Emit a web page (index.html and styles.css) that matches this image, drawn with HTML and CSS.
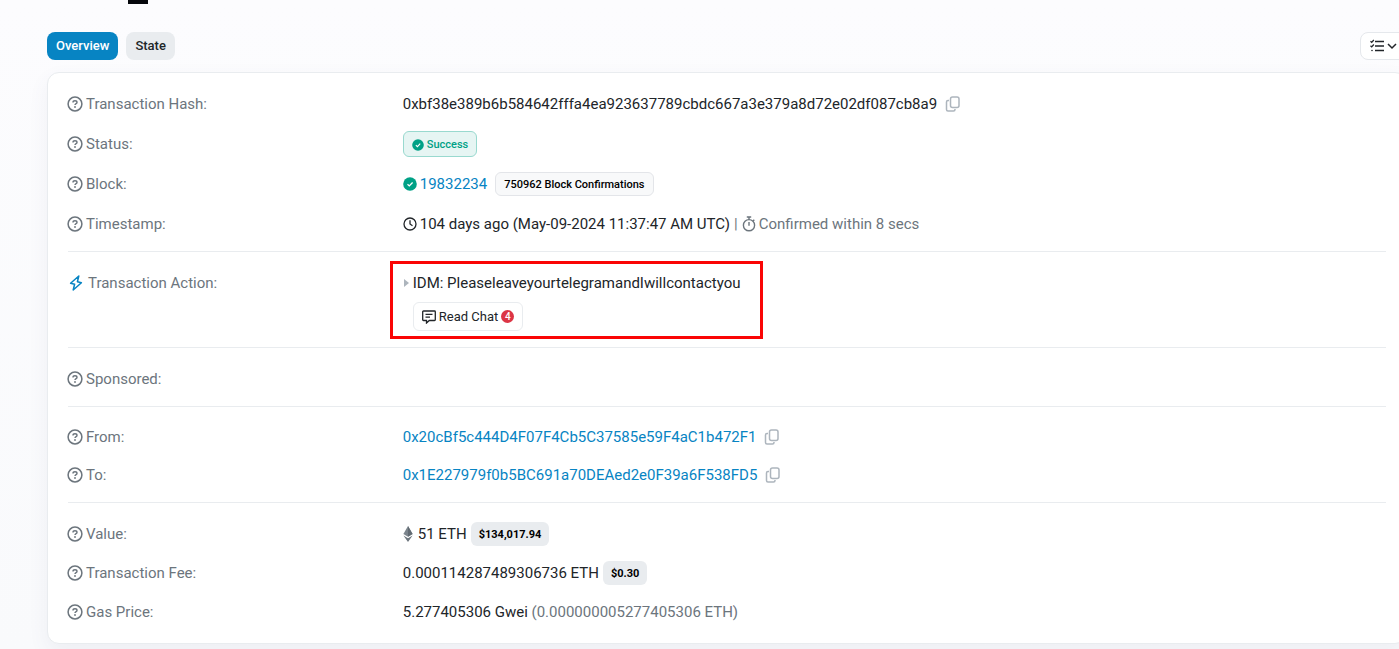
FILE: index.html
```
<!DOCTYPE html>
<html lang="en">

<head>
    <meta charset="UTF-8">
    <meta name="viewport" content="width=device-width, initial-scale=1.0">
    <title>Transaction Details</title>
    <link rel="stylesheet" href="styles.css">
</head>

<body>

    <!-- shared icons -->
    <svg class="sprite" aria-hidden="true">
        <symbol id="help" viewBox="0 0 16 16">
            <circle cx="8" cy="8" r="6.9" fill="none" stroke="currentColor" stroke-width="1.5" />
            <path d="M6 6.4C6 5.3 6.8 4.8 8 4.8S10 5.4 10 6.4C10 7.6 8 7.5 8 9" fill="none" stroke="currentColor" stroke-width="1.4" />
            <circle cx="8" cy="11" r=".9" fill="currentColor" />
        </symbol>
        <symbol id="copy" viewBox="0 0 16 16">
            <rect x="5.5" y="1" width="8.500" height="10.500" rx="2" fill="none" stroke="currentColor" stroke-width="1.5" />
            <path d="M4 4.500H3A1.500 1.500 0 0 0 1.500 6v7.500A1.500 1.500 0 0 0 3 15h5.500A1.500 1.500 0 0 0 10 13.500V13" fill="none" stroke="currentColor" stroke-width="1.5" />
        </symbol>
        <symbol id="check" viewBox="0 0 14 14">
            <circle cx="7" cy="7" r="6.8" fill="currentColor" />
            <path d="M4.500 7.200l1.800 1.700 3.300-3.400" fill="none" stroke="#fff" stroke-width="1.3" />
        </symbol>
    </svg>

    <div class="page">
        <div class="title-mark"></div>

        <nav>
            <button type="button" class="tab active">Overview</button>
            <button type="button" class="tab">State</button>
            <button type="button" class="options" aria-label="View options">
                <svg width="14" height="14" viewBox="0 0 14 14" fill="none" stroke="currentColor" stroke-width="1.3">
                    <path d="M5 2.500H14M5 7H14M5 11.500H14M.5 2.300l1.200 1.100L3.800 1M.5 6.800l1.200 1.100 2.100-2.400" />
                    <circle cx="2" cy="11.500" r=".8" fill="currentColor" stroke="none" />
                </svg>
                <svg width="10" height="8" viewBox="0 0 10 8" fill="none" stroke="currentColor" stroke-width="1.5">
                    <path d="M1 2l4 4 4-4" />
                </svg>
            </button>
        </nav>

        <main>
            <dl class="summary">
                <div class="row">
                    <dt><svg class="help"><use href="#help" /></svg>Transaction Hash:</dt>
                    <dd>0xbf38e389b6b584642fffa4ea923637789cbdc667a3e379a8d72e02df087cb8a9<button type="button" class="copy" aria-label="Copy hash"><svg><use href="#copy" /></svg></button></dd>
                </div>
                <div class="row">
                    <dt><svg class="help"><use href="#help" /></svg>Status:</dt>
                    <dd><span class="badge success"><svg><use href="#check" /></svg>Success</span></dd>
                </div>
                <div class="row">
                    <dt><svg class="help"><use href="#help" /></svg>Block:</dt>
                    <dd><svg class="icon green"><use href="#check" /></svg><a href="#">19832234</a><span class="badge confirmations">750962 Block Confirmations</span></dd>
                </div>
                <div class="row">
                    <dt><svg class="help"><use href="#help" /></svg>Timestamp:</dt>
                    <dd>
                        <svg class="icon" viewBox="0 0 14 14" fill="none" stroke="currentColor" stroke-width="1.3">
                            <circle cx="7" cy="7" r="6" />
                            <path d="M7 3.300V7l2.500 1.700" />
                        </svg>
                        <span>104 days ago (May-09-2024 11:37:47 AM UTC)</span>
                        <span class="muted bar">|</span>
                        <svg class="stopwatch muted" viewBox="0 0 14 16" fill="none" stroke="currentColor" stroke-width="1.4">
                            <circle cx="7" cy="9.200" r="5.600" />
                            <path d="M4.800 1h4.400M7 1v2.500M7 6v3.700M11 5l1.300-1.300" />
                        </svg>
                        <span class="muted">Confirmed within 8 secs</span>
                    </dd>
                </div>
            </dl>

            <dl class="action">
                <div class="row">
                    <dt>
                        <svg class="bolt" viewBox="0 0 16 16" fill="none" stroke="currentColor" stroke-width="1.500" stroke-linejoin="round">
                            <path d="M10.800 1L2.600 8.200l4 1.100L5.200 15l8.200-7.200-4-1.100z" />
                        </svg>Transaction Action:
                    </dt>
                    <dd>
                        <div class="message"><span class="arrow"></span>IDM: PleaseleaveyourtelegramandIwillcontactyou</div>
                        <button type="button" class="chat">
                            <svg width="14" height="14" viewBox="0 0 14 14" fill="none" stroke="currentColor" stroke-width="1.300">
                                <path d="M1.500 1h11a.8.8 0 0 1 .8.800v7.900a.8.800 0 0 1-.8.800H7.300L4.500 13v-2.500h-3a.8.800 0 0 1-.8-.8V1.800A.8.800 0 0 1 1.500 1zM3.500 4.400h7M3.500 7.200h4.500" />
                            </svg>
                            <span>Read Chat</span>
                            <span class="count">4</span>
                        </button>
                        <div class="highlight"></div>
                    </dd>
                </div>
            </dl>

            <dl>
                <div class="row">
                    <dt><svg class="help"><use href="#help" /></svg>Sponsored:</dt>
                    <dd></dd>
                </div>
            </dl>

            <dl class="addresses">
                <div class="row">
                    <dt><svg class="help"><use href="#help" /></svg>From:</dt>
                    <dd><a href="#">0x20cBf5c444D4F07F4Cb5C37585e59F4aC1b472F1</a><button type="button" class="copy" aria-label="Copy from address"><svg><use href="#copy" /></svg></button></dd>
                </div>
                <div class="row">
                    <dt><svg class="help"><use href="#help" /></svg>To:</dt>
                    <dd><a href="#">0x1E227979f0b5BC691a70DEAed2e0F39a6F538FD5</a><button type="button" class="copy" aria-label="Copy to address"><svg><use href="#copy" /></svg></button></dd>
                </div>
            </dl>

            <dl class="fees">
                <div class="row">
                    <dt><svg class="help"><use href="#help" /></svg>Value:</dt>
                    <dd>
                        <svg class="eth" viewBox="0 0 10 16">
                            <path d="M5 0L.4 8 5 10.800 9.600 8z" fill="#7b848c" />
                            <path d="M5 0v10.800L9.600 8z" fill="#626b73" />
                            <path d="M.4 9.400L5 16l4.600-6.600L5 12.200z" fill="#6c757d" />
                        </svg>
                        <span>51 ETH</span>
                        <span class="badge price">$134,017.94</span>
                    </dd>
                </div>
                <div class="row">
                    <dt><svg class="help"><use href="#help" /></svg>Transaction Fee:</dt>
                    <dd><span>0.000114287489306736 ETH</span><span class="badge price">$0.30</span></dd>
                </div>
                <div class="row">
                    <dt><svg class="help"><use href="#help" /></svg>Gas Price:</dt>
                    <dd><span>5.277405306 Gwei</span><span class="muted">&nbsp;(0.000000005277405306 ETH)</span></dd>
                </div>
            </dl>
        </main>
    </div>

</body>

</html>
```
FILE: styles.css
```
* {
    box-sizing: border-box;
}

body {
    margin: 0;
    background: linear-gradient(#fcfcfe, #f9fafc);
    color: #212529;
    font-family: Roboto, "Liberation Sans", sans-serif;
    font-size: 15px;
    line-height: 24px;
    overflow-x: hidden;
}

/* the card runs a little past the right edge of the window */
.page {
    margin-left: 47px;
    margin-right: -8px;
    padding-bottom: 5px;
}

.sprite {
    position: absolute;
    width: 0;
    height: 0;
}

.title-mark {
    width: 20px;
    height: 4px;
    margin-left: 81px;
    background-color: #05070b;
}

button {
    font-family: inherit;
    color: inherit;
    cursor: pointer;
}

a {
    color: #0784c3;
    text-decoration: none;
}

nav {
    display: flex;
    gap: 8px;
    padding: 28px 0 12px;
}

.tab {
    height: 28px;
    padding: 0 9px 1px;
    border: 0;
    border-radius: 8px;
    background-color: #e9ecef;
    font-size: 13px;
    font-weight: 500;
}

.tab.active {
    background-color: #0784c3;
    color: white;
}

.options {
    display: flex;
    align-items: center;
    gap: 3px;
    height: 28px;
    margin-left: auto;
    padding: 0 9px;
    border: 1px solid #e5e8ec;
    border-radius: 8px;
    background-color: white;
}

main {
    padding: 0 20px;
    background-color: white;
    border: 1px solid #e9ecef;
    border-radius: 12px;
    box-shadow: 0 8px 20px rgba(80, 90, 125, .07);
}

dl {
    display: flex;
    flex-direction: column;
    gap: 14px;
    margin: 0;
    padding: 18px 0 14px;
    border-bottom: 1px solid #e9ecef;
}

dl:last-child {
    border-bottom: 0;
}

.action {
    padding-bottom: 16px;
}

.addresses {
    gap: 12px;
    padding-top: 17px;
}

.fees {
    gap: 13px;
    padding-bottom: 18px;
}

.row {
    display: grid;
    grid-template-columns: 1fr 3fr;
    gap: 7px;
}

dt,
dd {
    display: flex;
    align-items: center;
    min-height: 26px;
    margin: 0;
    white-space: nowrap;
}

dt {
    color: #6c757d;
    align-self: start;
}

.muted {
    color: #6c757d;
}

.help {
    width: 16px;
    height: 16px;
    margin-left: -1px;
    margin-right: 3px;
}

.bolt {
    width: 16px;
    height: 16px;
    margin-right: 4px;
    color: #0784c3;
}

.icon {
    width: 14px;
    height: 14px;
    margin-right: 3px;
}

.green {
    color: #00a186;
}

.bar {
    margin: 0 4px;
}

.stopwatch {
    width: 14px;
    height: 16px;
    margin-right: 3px;
}

.eth {
    width: 10px;
    height: 16px;
    margin-right: 5px;
}

.copy {
    display: flex;
    margin-left: 8px;
    padding: 0;
    border: 0;
    background: none;
    color: #adb5bd;
}

.copy svg {
    width: 16px;
    height: 16px;
}

.badge {
    display: flex;
    align-items: center;
    height: 24px;
    padding: 1px 8px 0;
    border-radius: 6px;
    color: black;
    font-size: 11px;
    font-weight: 500;
}

.success {
    gap: 3px;
    height: 26px;
    border: 1px solid #99d9cf;
    background-color: #e6f5f3;
    color: #00a186;
}

.success svg {
    width: 12px;
    height: 12px;
}

.confirmations {
    margin-left: 8px;
    border: 1px solid #e3e5e9;
    background-color: #f8f9fa;
}

.price {
    margin-left: 4px;
    background-color: #e9ecef;
    font-weight: bold;
}

.action dd {
    position: relative;
    flex-direction: column;
    align-items: flex-start;
}

.message {
    display: flex;
    align-items: center;
    height: 26px;
}

.arrow {
    margin: 0 4px 0 1px;
    border: 4px solid transparent;
    border-left: 5px solid #adb5bd;
    border-right: 0;
}

.chat {
    display: flex;
    align-items: center;
    gap: 3px;
    height: 29px;
    margin: 6px 0 0 10px;
    padding: 0 8px;
    border: 1px solid #e9ecef;
    border-radius: 6px;
    background-color: white;
    font-size: 13px;
}

.count {
    width: 13px;
    height: 13px;
    border-radius: 50%;
    background-color: #dc3545;
    color: white;
    font-size: 10px;
    font-weight: 500;
    line-height: 13px;
}

.highlight {
    position: absolute;
    top: -9px;
    left: -13px;
    width: 373px;
    height: 78px;
    border: 3px solid #fa0505;
    pointer-events: none;
}
```
